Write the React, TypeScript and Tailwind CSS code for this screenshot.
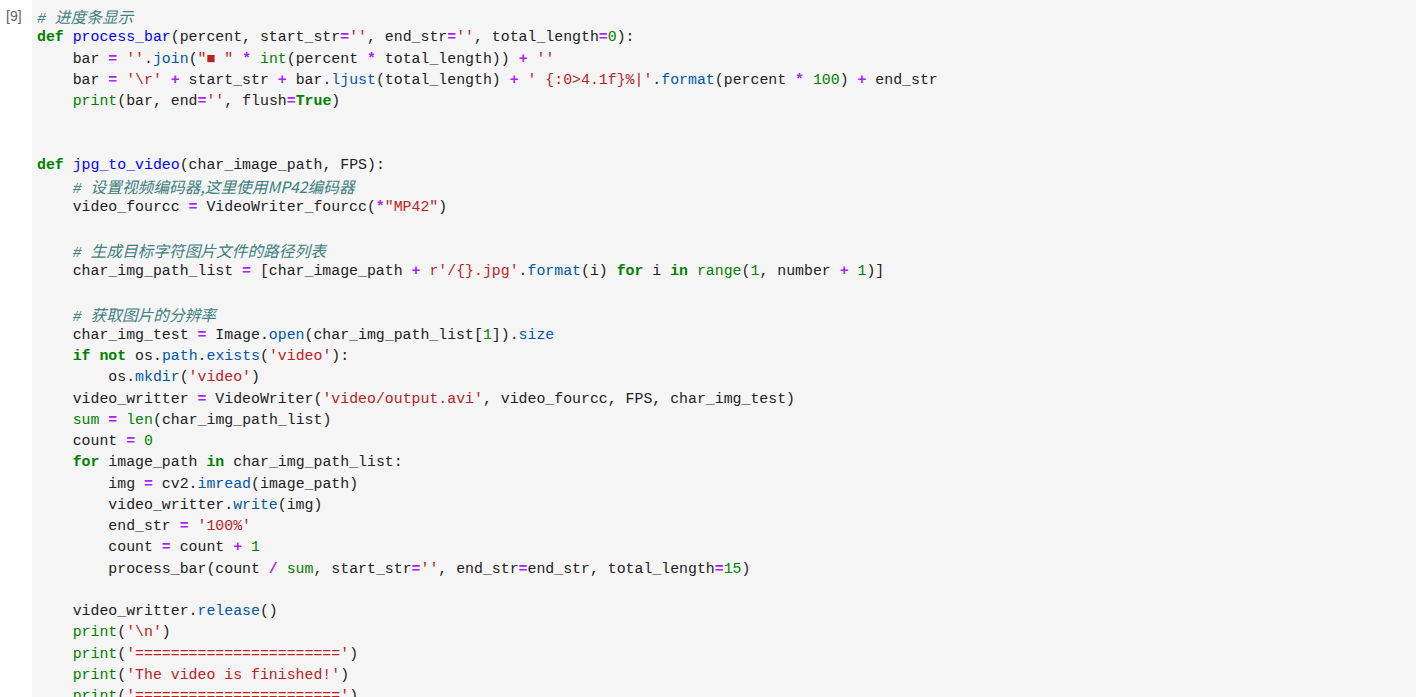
import React from "react";

type Tok = [string, string];

const cls: Record<string, string> = {
  t: "text-[#212121]",
  k: "text-[#008000] font-bold",
  f: "text-[#0000ff]",
  c: "text-[#408080] italic",
  cj: "text-[#408080] italic text-[15.7px] font-['Noto_Sans_CJK_SC',sans-serif]",
  s: "text-[#ba2121]",
  o: "text-[#aa22ff] font-bold",
  n: "text-[#008000]",
  b: "text-[#008000]",
  p: "text-[#0055aa]",
};

// one entry per source line, each a list of [kind, text]
const lines: Tok[][] = [
  [["c", "# "], ["cj", "进度条显示"]],
  [
    ["k", "def"], ["t", " "], ["f", "process_bar"], ["t", "(percent, start_str"], ["o", "="], ["s", "''"],
    ["t", ", end_str"], ["o", "="], ["s", "''"], ["t", ", total_length"], ["o", "="], ["n", "0"], ["t", "):"],
  ],
  [
    ["t", "    bar "], ["o", "="], ["t", " "], ["s", "''"], ["t", "."], ["p", "join"], ["t", "("], ["s", "\"■ \""],
    ["t", " "], ["o", "*"], ["t", " "], ["b", "int"], ["t", "(percent "], ["o", "*"], ["t", " total_length)) "],
    ["o", "+"], ["t", " "], ["s", "''"],
  ],
  [
    ["t", "    bar "], ["o", "="], ["t", " "], ["s", "'\\r'"], ["t", " "], ["o", "+"], ["t", " start_str "], ["o", "+"],
    ["t", " bar."], ["p", "ljust"], ["t", "(total_length) "], ["o", "+"], ["t", " "], ["s", "' {:0>4.1f}%|'"],
    ["t", "."], ["p", "format"], ["t", "(percent "], ["o", "*"], ["t", " "], ["n", "100"], ["t", ") "], ["o", "+"],
    ["t", " end_str"],
  ],
  [["t", "    "], ["b", "print"], ["t", "(bar, end"], ["o", "="], ["s", "''"], ["t", ", flush"], ["o", "="], ["k", "True"], ["t", ")"]],
  [],
  [],
  [["k", "def"], ["t", " "], ["f", "jpg_to_video"], ["t", "(char_image_path, FPS):"]],
  [["t", "    "], ["c", "# "], ["cj", "设置视频编码器,这里使用MP42编码器"]],
  [["t", "    video_fourcc "], ["o", "="], ["t", " VideoWriter_fourcc("], ["o", "*"], ["s", "\"MP42\""], ["t", ")"]],
  [],
  [["t", "    "], ["c", "# "], ["cj", "生成目标字符图片文件的路径列表"]],
  [
    ["t", "    char_img_path_list "], ["o", "="], ["t", " [char_image_path "], ["o", "+"], ["t", " "], ["s", "r'/{}.jpg'"],
    ["t", "."], ["p", "format"], ["t", "(i) "], ["k", "for"], ["t", " i "], ["k", "in"], ["t", " "], ["b", "range"],
    ["t", "("], ["n", "1"], ["t", ", number "], ["o", "+"], ["t", " "], ["n", "1"], ["t", ")]"],
  ],
  [],
  [["t", "    "], ["c", "# "], ["cj", "获取图片的分辨率"]],
  [["t", "    char_img_test "], ["o", "="], ["t", " Image."], ["p", "open"], ["t", "(char_img_path_list["], ["n", "1"], ["t", "])."], ["p", "size"]],
  [["t", "    "], ["k", "if"], ["t", " "], ["k", "not"], ["t", " os."], ["p", "path"], ["t", "."], ["p", "exists"], ["t", "("], ["s", "'video'"], ["t", "):"]],
  [["t", "        os."], ["p", "mkdir"], ["t", "("], ["s", "'video'"], ["t", ")"]],
  [["t", "    video_writter "], ["o", "="], ["t", " VideoWriter("], ["s", "'video/output.avi'"], ["t", ", video_fourcc, FPS, char_img_test)"]],
  [["t", "    "], ["b", "sum"], ["t", " "], ["o", "="], ["t", " "], ["b", "len"], ["t", "(char_img_path_list)"]],
  [["t", "    count "], ["o", "="], ["t", " "], ["n", "0"]],
  [["t", "    "], ["k", "for"], ["t", " image_path "], ["k", "in"], ["t", " char_img_path_list:"]],
  [["t", "        img "], ["o", "="], ["t", " cv2."], ["p", "imread"], ["t", "(image_path)"]],
  [["t", "        video_writter."], ["p", "write"], ["t", "(img)"]],
  [["t", "        end_str "], ["o", "="], ["t", " "], ["s", "'100%'"]],
  [["t", "        count "], ["o", "="], ["t", " count "], ["o", "+"], ["t", " "], ["n", "1"]],
  [
    ["t", "        process_bar(count "], ["o", "/"], ["t", " "], ["b", "sum"], ["t", ", start_str"], ["o", "="], ["s", "''"],
    ["t", ", end_str"], ["o", "="], ["t", "end_str, total_length"], ["o", "="], ["n", "15"], ["t", ")"],
  ],
  [],
  [["t", "    video_writter."], ["p", "release"], ["t", "()"]],
  [["t", "    "], ["b", "print"], ["t", "("], ["s", "'\\n'"], ["t", ")"]],
  [["t", "    "], ["b", "print"], ["t", "("], ["s", "'======================='"], ["t", ")"]],
  [["t", "    "], ["b", "print"], ["t", "("], ["s", "'The video is finished!'"], ["t", ")"]],
  [["t", "    "], ["b", "print"], ["t", "("], ["s", "'======================='"], ["t", ")"]],
];

const CodeLine = ({ toks }: { toks: Tok[] }) => (
  <div className="h-[21.25px] whitespace-pre">
    {toks.length === 0 ? " " : toks.map(([k, text], i) => (
      <span key={i} className={cls[k]}>{text}</span>
    ))}
  </div>
);

export default function App() {
  return (
    <div className="h-[697px] overflow-hidden bg-white flex">
      <div className="w-[32px] shrink-0 pt-[6px] pl-[6px] text-[14px] leading-[21.25px] text-[#616161] font-['Liberation_Sans',sans-serif]">
        [9]
      </div>
      <div className="flex-1 mr-[9px] bg-[#f5f5f5] pl-[5px] pt-[6px] text-[14.87px] leading-[21.25px] font-['Liberation_Mono','Noto_Sans_CJK_SC',monospace]">
        {lines.map((toks, i) => (
          <CodeLine key={i} toks={toks} />
        ))}
      </div>
    </div>
  );
}
